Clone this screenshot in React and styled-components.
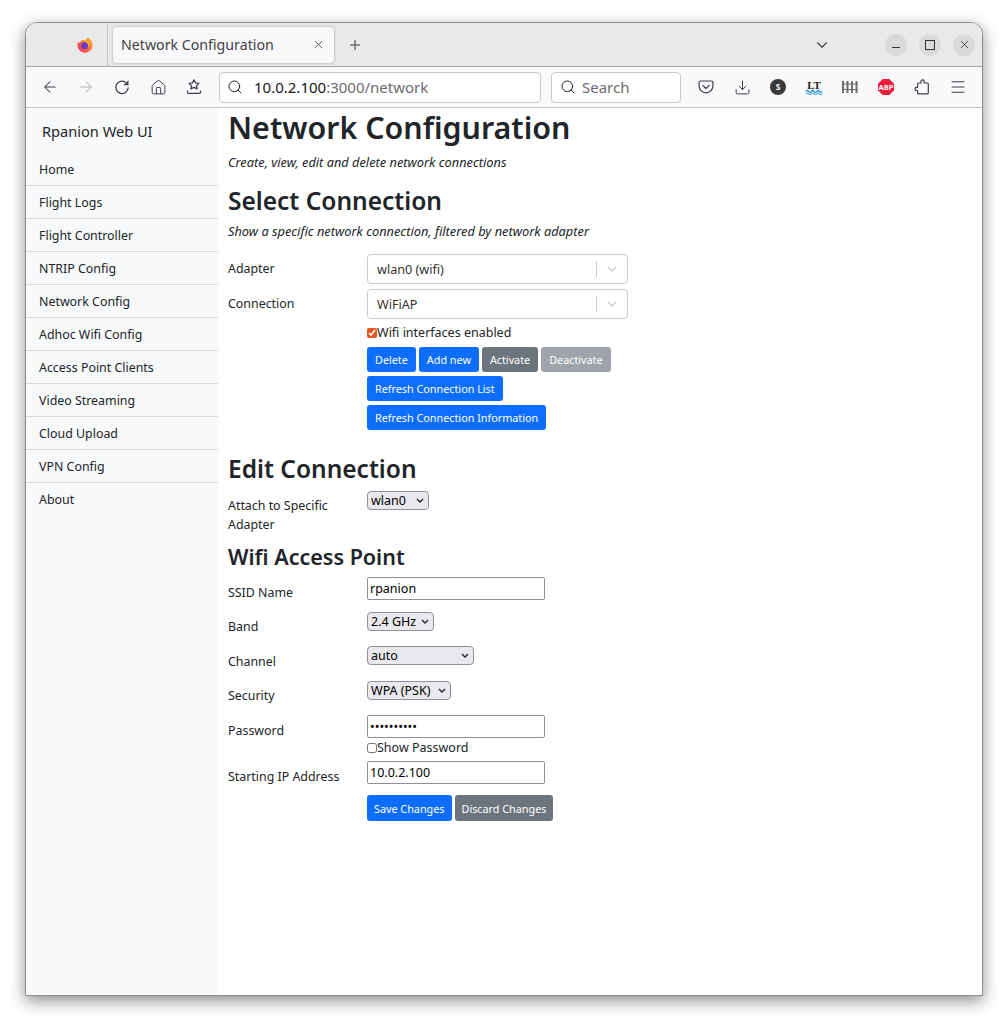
import styled, { createGlobalStyle } from 'styled-components';
import { ArrowLeft, ArrowRight, Home, Search, Download, Menu, X, Plus, ChevronDown } from 'lucide-react';

const GlobalStyle = createGlobalStyle`
  html, body { margin: 0; padding: 0; background: #fff; }
  body { font-family: "Noto Sans", "Open Sans", sans-serif; color: #212529; }
`;

const chevron = `url("data:image/svg+xml,%3Csvg xmlns='http://www.w3.org/2000/svg' width='8' height='5'%3E%3Cpath d='M1 1l3 3 3-3' fill='none' stroke='%23222' stroke-width='1.3'/%3E%3C/svg%3E")`;

const Page = styled.div`
  width: 1008px;
  height: 1024px;
  padding: 22px 25px 0;
  box-sizing: border-box;
  overflow: hidden;
`;

const Window = styled.div`
  width: 958px;
  height: 974px;
  box-sizing: border-box;
  border: 1px solid #8e8e8e;
  border-radius: 12px 12px 0 0;
  box-shadow: 0 5px 16px rgba(0, 0, 0, 0.45);
  display: flex;
  flex-direction: column;
  overflow: hidden;
  background: #fff;
`;

const TabBar = styled.div`
  height: 43px;
  flex: none;
  background: #e9e9e9;
  border-bottom: 1px solid #a8a8a8;
  display: flex;
  align-items: center;
`;

const PinnedTab = styled.div`
  width: 82px;
  height: 43px;
  border-right: 1px solid #c4c4c4;
  display: flex;
  align-items: center;
  justify-content: flex-end;
  padding-right: 14px;
  box-sizing: border-box;
`;

const Tab = styled.div`
  margin-left: 5px;
  width: 221px;
  height: 36px;
  box-sizing: border-box;
  background: #f9f9fb;
  border-radius: 4px;
  box-shadow: 0 0 3px rgba(0, 0, 0, 0.3);
  display: flex;
  align-items: center;
  justify-content: space-between;
  padding: 0 9px 0 8px;
  font-size: 14.2px;
  color: #3f3f46;
`;

const NewTab = styled.div`
  margin-left: 13px;
  display: flex;
  color: #3a3a3a;
`;

const TabSpacer = styled.div`
  flex: 1;
`;

const ListTabs = styled.div`
  display: flex;
  margin-right: 54px;
  color: #3a3a3a;
`;

const WinButtons = styled.div`
  display: flex;
  gap: 12px;
  margin-right: 7px;
`;

const WinButton = styled.div`
  width: 22px;
  height: 22px;
  border-radius: 50%;
  background: #dadada;
  color: #333;
  display: flex;
  align-items: center;
  justify-content: center;
`;

const MinimizeBar = styled.span`
  width: 8px;
  height: 1px;
  margin-top: 6px;
  background: #333;
`;

const MaximizeBox = styled.span`
  width: 8px;
  height: 8px;
  border: 1px solid #333;
`;

const Toolbar = styled.div`
  height: 41px;
  flex: none;
  box-sizing: border-box;
  background: #f9f9fb;
  border-bottom: 1px solid #c2c2c2;
  display: flex;
  align-items: center;
  padding-left: 6px;
`;

const NavIcons = styled.div`
  display: flex;
  align-items: center;
  color: #3f3f46;
  margin-right: 7px;
`;

const NavSlot = styled.div`
  width: 36px;
  display: flex;
  justify-content: center;
`;

const Field = styled.div`
  height: 31px;
  width: ${({ $width }) => $width}px;
  box-sizing: border-box;
  background: #fff;
  border: 1px solid #c8c8cc;
  border-radius: 4px;
  display: flex;
  align-items: center;
  gap: ${({ $gap }) => $gap}px;
  padding-left: ${({ $pad }) => $pad}px;
  margin-right: 10px;
  font-size: 15px;
  color: #6b6b70;
`;

const Host = styled.span`
  color: #15141a;
`;

const ExtIcons = styled.div`
  display: flex;
  align-items: center;
  margin-left: -3px;
`;

const ExtIcon = styled.div`
  width: 36px;
  height: 24px;
  display: flex;
  align-items: center;
  justify-content: center;
  color: #3f3f46;
`;

const Content = styled.div`
  flex: 1;
  display: flex;
  min-height: 0;
`;

const Sidebar = styled.nav`
  width: 192px;
  flex: none;
  background: #f8f9fa;
`;

const Brand = styled.div`
  height: 45px;
  display: flex;
  align-items: center;
  padding-left: 16px;
  font-size: 14.6px;
`;

const NavItem = styled.div`
  height: 33px;
  box-sizing: border-box;
  display: flex;
  align-items: center;
  padding-left: 13px;
  font-size: 12.4px;
  border-bottom: ${({ $last }) => ($last ? 'none' : '1px solid rgba(0, 0, 0, 0.125)')};
`;

const Main = styled.main`
  flex: 1;
  padding-left: 10px;
`;

const Title = styled.h1`
  margin: 0 0 5px;
  font-size: 30.4px;
  line-height: 39px;
  font-weight: 600;
`;

const Lead = styled.p`
  margin: 0;
  font-size: 12.8px;
  line-height: 20px;
  font-style: italic;
  height: ${({ $height }) => $height}px;
`;

const Heading = styled.h2`
  margin: ${({ $top }) => $top || 0}px 0 ${({ $bottom }) => $bottom || 0}px;
  font-size: ${({ $size }) => $size}px;
  line-height: 32px;
  font-weight: 600;
`;

const Row = styled.div`
  display: grid;
  grid-template-columns: 139px 1fr;
  align-items: start;
  margin-top: ${({ $top }) => $top || 0}px;
`;

const Label = styled.label`
  font-size: 12.4px;
  line-height: 19px;
  padding-top: ${({ $pad }) => $pad || 0}px;
`;

const Combo = styled.div`
  width: 261px;
  height: 30px;
  box-sizing: border-box;
  border: 1px solid #ccc;
  border-radius: 4px;
  display: flex;
  align-items: center;
  padding-left: 9px;
  font-size: 12.6px;
  color: #333;
`;

const ComboValue = styled.span`
  flex: 1;
`;

const ComboArrow = styled.div`
  width: 30px;
  height: 16px;
  border-left: 1px solid #ccc;
  display: flex;
  align-items: center;
  justify-content: center;
  color: #ccc;
`;

const Check = styled.label`
  display: flex;
  align-items: center;
  font-size: 12.5px;
  line-height: 14px;
  margin-top: ${({ $top }) => $top || 0}px;
`;

const CheckBox = styled.input.attrs({ type: 'checkbox' })`
  width: 10px;
  height: 10px;
  margin: 0;
  accent-color: #e95420;
`;

const ButtonRow = styled.div`
  display: flex;
  gap: 3px;
  margin-top: ${({ $top }) => $top || 0}px;
`;

const Button = styled.button`
  height: ${({ $height }) => $height || 25}px;
  padding: 0 ${({ $pad }) => $pad || 8}px;
  box-sizing: border-box;
  border: none;
  border-radius: 3px;
  font-family: inherit;
  font-size: 10.8px;
  color: #fff;
  background: ${({ $variant }) => ($variant === 'grey' ? '#6c757d' : '#0d6efd')};
  opacity: ${({ $disabled }) => ($disabled ? 0.65 : 1)};
`;

const Select = styled.select`
  appearance: none;
  height: 19px;
  width: ${({ $width }) => $width}px;
  box-sizing: border-box;
  border: 1px solid #8f8f9d;
  border-radius: 4px;
  padding: 0 0 0 3px;
  font-family: inherit;
  font-size: 12.5px;
  line-height: 17px;
  color: #000;
  background: #e9e9ed ${chevron} no-repeat right 4px center;
`;

const TextInput = styled.input`
  display: block;
  width: 178px;
  height: 23px;
  box-sizing: border-box;
  border: 1px solid #8f8f9d;
  border-radius: 2px;
  padding: 0 2px;
  font-family: inherit;
  font-size: 12.5px;
  color: #000;
  background: #fff;
`;

const FirefoxLogo = () => (
  <svg width="16" height="16" viewBox="0 0 16 16">
    <defs>
      <linearGradient id="ff" x1="1" y1="0" x2="0" y2="1">
        <stop offset="0" stopColor="#ffbd2e" />
        <stop offset="0.55" stopColor="#ff6a3a" />
        <stop offset="1" stopColor="#e5227a" />
      </linearGradient>
    </defs>
    <path d="M11 0.400c2.800 1.600 4.600 4.300 4.600 7.800A7.600 7.600 0 1 1 1.200 4.700c.3.700.7 1.100 1.200 1.300C3.300 3.600 6 2.600 8.300 3 9 2 10 1 11 .4z" fill="url(#ff)" />
    <circle cx="7.800" cy="8.400" r="3.700" fill="#6b3ac7" />
    <path d="M4.400 5.600c2.200-1.500 5.500-.8 6.400 1.900.4 1.300.2 2.400-.5 3.300 2.300-1.200 2.600-4.500.8-6.300-1.800-1.700-5-1.400-6.700 1.100z" fill="#ffb42e" />
  </svg>
);

const ReloadIcon = () => (
  <svg width="16" height="16" viewBox="0 0 16 16" fill="none" stroke="currentColor" strokeWidth="1.3">
    <path d="M14.200 8.500a6.200 6.200 0 1 1-2.400-5" />
    <path d="M14.500 1.200v5h-5z" fill="currentColor" stroke="none" />
  </svg>
);

const BookmarkIcon = () => (
  <svg width="16" height="16" viewBox="0 0 16 16" fill="none" stroke="currentColor" strokeWidth="1.2" strokeLinejoin="round">
    <path d="M8 .8l1.600 3.100 3.300.5-2.400 2.300.6 3.200L8 8.400 4.900 9.900l.6-3.200-2.400-2.300 3.300-.5z" />
    <path d="M1.500 11.500v1.700c0 .7.5 1.200 1.200 1.200h10.600c.7 0 1.200-.5 1.200-1.200v-1.700" />
  </svg>
);

const PocketIcon = () => (
  <svg width="16" height="16" viewBox="0 0 16 16" fill="none" stroke="currentColor" strokeWidth="1.2" strokeLinecap="round" strokeLinejoin="round">
    <path d="M2.500 2h11c.8 0 1.400.6 1.400 1.400V7c0 3.800-3 6.800-6.900 6.800S1.100 10.800 1.100 7V3.400C1.100 2.600 1.700 2 2.500 2z" />
    <path d="M5 6.500l3 3 3-3" />
  </svg>
);

const SIcon = () => (
  <svg width="16" height="16" viewBox="0 0 16 16">
    <circle cx="8" cy="8" r="8" fill="#3a3a3a" />
    <text x="8" y="11" textAnchor="middle" fontSize="8.500" fontWeight="700" fill="#fff" fontFamily="Noto Sans">S</text>
  </svg>
);

const LtIcon = () => (
  <svg width="18" height="16" viewBox="0 0 18 16">
    <text x="9" y="9.500" textAnchor="middle" fontSize="11" fontWeight="700" fill="#222" fontFamily="Liberation Serif">LT</text>
    <path d="M1 12.500q1.300-2 2.700 0t2.700 0 2.700 0 2.700 0 2.700 0 2.500 0" fill="none" stroke="#1a8fd6" strokeWidth="1.300" />
    <path d="M1 15q1.300-2 2.700 0t2.700 0 2.700 0 2.700 0 2.700 0 2.500 0" fill="none" stroke="#1a8fd6" strokeWidth="1" />
  </svg>
);

const FenceIcon = () => (
  <svg width="16" height="14" viewBox="0 0 16 14" fill="#6e6e6e">
    <rect x="0" y="1" width="2" height="12" />
    <rect x="4.500" y="1" width="2" height="12" />
    <rect x="9" y="1" width="2" height="12" />
    <rect x="13.500" y="1" width="2" height="12" />
    <rect x="0" y="3.500" width="16" height="1" />
    <rect x="0" y="9" width="16" height="1" />
  </svg>
);

const AbpIcon = () => (
  <svg width="16" height="16" viewBox="0 0 16 16">
    <path d="M4.700 0h6.600L16 4.700v6.600L11.300 16H4.700L0 11.300V4.700z" fill="#ed1c3c" />
    <text x="8" y="10.800" textAnchor="middle" fontSize="7.500" fontWeight="700" fill="#fff" fontFamily="Noto Sans">ABP</text>
  </svg>
);

const PuzzleIcon = () => (
  <svg width="16" height="16" viewBox="0 0 16 16" fill="none" stroke="currentColor" strokeWidth="1.2" strokeLinejoin="round">
    <path d="M7 2.200c0-.9.800-1.400 1.600-1.400s1.600.5 1.600 1.400V4h3.200c.5 0 .9.400.9.900V14c0 .5-.4.900-.9.900H4.500c-.5 0-.9-.4-.9-.9v-2.500H2.500c-.9 0-1.500-.8-1.500-1.600s.6-1.600 1.500-1.600h1.100V4.900c0-.5.400-.9.900-.9H7z" />
  </svg>
);

const navItems = [
  'Home',
  'Flight Logs',
  'Flight Controller',
  'NTRIP Config',
  'Network Config',
  'Adhoc Wifi Config',
  'Access Point Clients',
  'Video Streaming',
  'Cloud Upload',
  'VPN Config',
  'About',
];

export default function App() {
  return (
    <>
      <GlobalStyle />
      <Page>
        <Window>
          <TabBar>
            <PinnedTab><FirefoxLogo /></PinnedTab>
            <Tab>
              Network Configuration
              <X size={13} strokeWidth={1.5} />
            </Tab>
            <NewTab><Plus size={16} strokeWidth={1.5} /></NewTab>
            <TabSpacer />
            <ListTabs><ChevronDown size={18} strokeWidth={1.5} /></ListTabs>
            <WinButtons>
              <WinButton><MinimizeBar /></WinButton>
              <WinButton><MaximizeBox /></WinButton>
              <WinButton><X size={13} strokeWidth={1.5} /></WinButton>
            </WinButtons>
          </TabBar>
          <Toolbar>
            <NavIcons>
              <NavSlot><ArrowLeft size={18} strokeWidth={1.4} /></NavSlot>
              <NavSlot><ArrowRight size={18} strokeWidth={1.4} color="#b4b4b8" /></NavSlot>
              <NavSlot><ReloadIcon /></NavSlot>
              <NavSlot><Home size={17} strokeWidth={1.4} /></NavSlot>
              <NavSlot><BookmarkIcon /></NavSlot>
            </NavIcons>
            <Field $width={322} $pad={7} $gap={11}>
              <Search size={16} strokeWidth={1.5} color="#222" />
              <span><Host>10.0.2.100</Host>:3000/network</span>
            </Field>
            <Field $width={130} $pad={8} $gap={6}>
              <Search size={16} strokeWidth={1.5} color="#222" />
              <span>Search</span>
            </Field>
            <ExtIcons>
              <ExtIcon><PocketIcon /></ExtIcon>
              <ExtIcon><Download size={17} strokeWidth={1.4} /></ExtIcon>
              <ExtIcon><SIcon /></ExtIcon>
              <ExtIcon><LtIcon /></ExtIcon>
              <ExtIcon><FenceIcon /></ExtIcon>
              <ExtIcon><AbpIcon /></ExtIcon>
              <ExtIcon><PuzzleIcon /></ExtIcon>
              <ExtIcon><Menu size={18} strokeWidth={1.4} /></ExtIcon>
            </ExtIcons>
          </Toolbar>
          <Content>
            <Sidebar>
              <Brand>Rpanion Web UI</Brand>
              {navItems.map((item, i) => (
                <NavItem key={item} $last={i === navItems.length - 1}>{item}</NavItem>
              ))}
            </Sidebar>
            <Main>
              <Title>Network Configuration</Title>
              <Lead $height={33}>Create, view, edit and delete network connections</Lead>
              <Heading $size={24.5} $bottom={4}>Select Connection</Heading>
              <Lead $height={33}>Show a specific network connection, filtered by network adapter</Lead>
              <Row>
                <Label $pad={5}>Adapter</Label>
                <Combo>
                  <ComboValue>wlan0 (wifi)</ComboValue>
                  <ComboArrow><ChevronDown size={16} strokeWidth={2} /></ComboArrow>
                </Combo>
              </Row>
              <Row $top={5}>
                <Label $pad={5}>Connection</Label>
                <div>
                  <Combo>
                    <ComboValue>WiFiAP</ComboValue>
                    <ComboArrow><ChevronDown size={16} strokeWidth={2} /></ComboArrow>
                  </Combo>
                  <Check $top={7}><CheckBox defaultChecked />Wifi interfaces enabled</Check>
                  <ButtonRow $top={7}>
                    <Button>Delete</Button>
                    <Button>Add new</Button>
                    <Button $variant="grey">Activate</Button>
                    <Button $variant="grey" $disabled>Deactivate</Button>
                  </ButtonRow>
                  <ButtonRow $top={4}><Button>Refresh Connection List</Button></ButtonRow>
                  <ButtonRow $top={4}><Button>Refresh Connection Information</Button></ButtonRow>
                </div>
              </Row>
              <Heading $size={24.5} $top={23}>Edit Connection</Heading>
              <Row $top={6}>
                <Label $pad={5}>Attach to Specific Adapter</Label>
                <Select $width={62} defaultValue="wlan0"><option>wlan0</option></Select>
              </Row>
              <Heading $size={21.5} $top={7}>Wifi Access Point</Heading>
              <Row $top={4}>
                <Label $pad={6}>SSID Name</Label>
                <TextInput defaultValue="rpanion" />
              </Row>
              <Row $top={10}>
                <Label $pad={5}>Band</Label>
                <Select $width={67}><option>2.4 GHz</option></Select>
              </Row>
              <Row $top={10}>
                <Label $pad={6}>Channel</Label>
                <Select $width={107}><option>auto</option></Select>
              </Row>
              <Row $top={10}>
                <Label $pad={5}>Security</Label>
                <Select $width={84}><option>WPA (PSK)</option></Select>
              </Row>
              <Row $top={10}>
                <Label $pad={6}>Password</Label>
                <div>
                  <TextInput type="password" defaultValue="rpanion123" />
                  <Check $top={3}><CheckBox />Show Password</Check>
                </div>
              </Row>
              <Row $top={6}>
                <Label $pad={6}>Starting IP Address</Label>
                <TextInput defaultValue="10.0.2.100" />
              </Row>
              <Row $top={9}>
                <span />
                <ButtonRow>
                  <Button $height={26} $pad={7}>Save Changes</Button>
                  <Button $height={26} $pad={7} $variant="grey">Discard Changes</Button>
                </ButtonRow>
              </Row>
            </Main>
          </Content>
        </Window>
      </Page>
    </>
  );
}
